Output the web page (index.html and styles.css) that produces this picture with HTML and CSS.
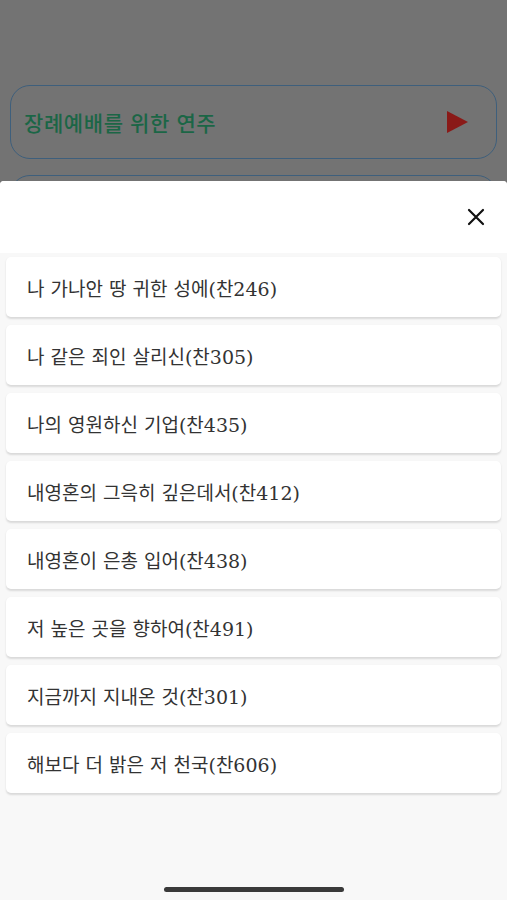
FILE: index.html
```html
<!DOCTYPE html>
<html lang="ko">
<head>
    <meta charset="UTF-8">
    <meta name="viewport" content="width=device-width, initial-scale=1.0">
    <title>장례예배 찬송</title>
    <link rel="stylesheet" href="styles.css">
</head>
<body>
    <div class="page">
        <div class="menu-button">
            <span>장례예배를 위한 연주</span>
            <span class="play"></span>
        </div>
        <div class="menu-button"></div>
    </div>

    <div class="sheet">
        <div class="sheet-header">
            <button class="close" aria-label="닫기">
                <svg width="18" height="18" viewBox="0 0 18 18">
                    <path d="M2 2 L16 16 M16 2 L2 16" stroke="#111" stroke-width="2.2" stroke-linecap="round"/>
                </svg>
            </button>
        </div>
        <ul class="song-list">
            <li class="song">나 가나안 땅 귀한 성에(찬246)</li>
            <li class="song">나 같은 죄인 살리신(찬305)</li>
            <li class="song">나의 영원하신 기업(찬435)</li>
            <li class="song">내영혼의 그윽히 깊은데서(찬412)</li>
            <li class="song">내영혼이 은총 입어(찬438)</li>
            <li class="song">저 높은 곳을 향하여(찬491)</li>
            <li class="song">지금까지 지내온 것(찬301)</li>
            <li class="song">해보다 더 밝은 저 천국(찬606)</li>
        </ul>
        <div class="home-indicator"></div>
    </div>
</body>
</html>
```

FILE: styles.css
```css
/* 배경은 모달이 열려 어둡게 처리된 상태 */
:root {
    --dim-color: #737373;
    --button-border: #3e5f7c;
    --button-text: #1b6646;
    --play-color: #8a1a18;
    --list-bg: #f8f8f8;
    --text-color: #333333;
}

* {
    box-sizing: border-box;
}

body {
    margin: 0;
    height: 900px;
    overflow: hidden;
    background-color: var(--dim-color);
    font-family: "DejaVu Serif", "Noto Sans CJK KR", serif;
}

.page {
    padding: 85px 10px 0;
    display: flex;
    flex-direction: column;
    gap: 16px;
}

.menu-button {
    height: 74px;
    border: 1.5px solid var(--button-border);
    border-radius: 20px;
    display: flex;
    align-items: center;
    justify-content: space-between;
    padding: 0 28px 0 13px;
    color: var(--button-text);
    font-family: "Noto Sans CJK KR", sans-serif;
    font-size: 21px;
    letter-spacing: 0.6px;
    font-weight: 500;
}

.play {
    width: 0;
    height: 0;
    border-top: 11px solid transparent;
    border-bottom: 11px solid transparent;
    border-left: 21px solid var(--play-color);
}

.sheet {
    position: absolute;
    top: 181px;
    left: 0;
    right: 0;
    bottom: 0;
    background-color: var(--list-bg);
    border-radius: 4px 4px 0 0;
}

.sheet-header {
    height: 72px;
    background-color: #ffffff;
    display: flex;
    justify-content: flex-end;
    align-items: center;
    padding-right: 22px;
    border-radius: 4px 4px 0 0;
}

.close {
    border: none;
    background: none;
    padding: 0;
    width: 18px;
    height: 18px;
    cursor: pointer;
}

.song-list {
    list-style: none;
    margin: 0;
    padding: 4px 6px;
    display: flex;
    flex-direction: column;
    gap: 8px;
}

.song {
    height: 60px;
    background-color: #ffffff;
    border-radius: 5px;
    box-shadow: 0 1.5px 2px rgba(0, 0, 0, 0.12);
    display: flex;
    align-items: center;
    padding-left: 21px;
    color: var(--text-color);
    font-size: 19px;
}

.home-indicator {
    position: absolute;
    left: 164px;
    bottom: 8px;
    width: 180px;
    height: 5px;
    border-radius: 3px;
    background-color: #3a3a3a;
}
```
